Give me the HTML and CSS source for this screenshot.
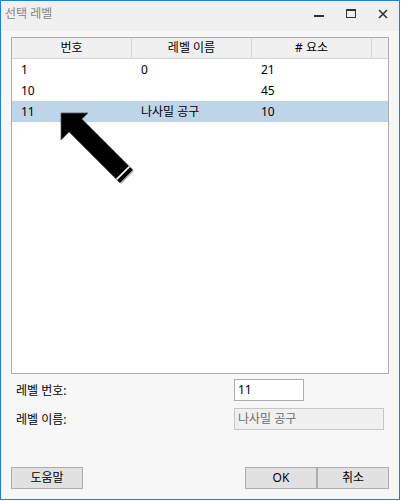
FILE: index.html
```html
<!DOCTYPE html>
<html lang="ko">
<head>
<meta charset="utf-8">
<title>선택 레벨</title>
<link rel="stylesheet" href="styles.css">
</head>
<body>
<div class="win">
  <div class="titlebar">
    <div class="title">선택 레벨</div>
    <div class="controls">
      <div class="ctl"><svg width="12" height="12" viewBox="0 0 12 12"><rect x="1" y="7" width="10" height="2" fill="#333"/></svg></div>
      <div class="ctl"><svg width="12" height="12" viewBox="0 0 12 12"><rect x="1.5" y="1.5" width="9" height="8" fill="none" stroke="#333" stroke-width="1"/><rect x="1" y="1" width="10" height="2" fill="#333"/></svg></div>
      <div class="ctl"><svg width="12" height="12" viewBox="0 0 12 12"><path d="M2 2 L10 10 M10 2 L2 10" stroke="#333" stroke-width="1.6"/></svg></div>
    </div>
  </div>
  <div class="client">
    <div class="list">
      <div class="row head">
        <div class="hc">번호</div>
        <div class="hc">레벨 이름</div>
        <div class="hc"># 요소</div>
        <div class="hc"></div>
      </div>
      <div class="row">
        <div class="c">1</div>
        <div class="c">0</div>
        <div class="c">21</div>
        <div class="c"></div>
      </div>
      <div class="row">
        <div class="c">10</div>
        <div class="c"></div>
        <div class="c">45</div>
        <div class="c"></div>
      </div>
      <div class="row sel">
        <div class="c">11</div>
        <div class="c">나사밀 공구</div>
        <div class="c">10</div>
        <div class="c"></div>
      </div>
    </div>
    <div class="form">
      <div class="lbl">레벨 번호:</div>
      <div class="field num">11</div>
      <div class="lbl">레벨 이름:</div>
      <div class="field name disabled">나사밀 공구</div>
    </div>
    <div class="buttons">
      <div class="btn">도움말</div>
      <div class="right">
        <div class="btn">OK</div>
        <div class="btn">취소</div>
      </div>
    </div>
  </div>
  <svg class="arrow" width="400" height="500" viewBox="0 0 400 500">
    <polygon points="61,113 88,113 81.9,119.1 132.9,170.1 120.1,182.9 69.1,131.9 61,140" fill="#000" stroke="#555" stroke-width="0.8" stroke-linejoin="miter"/>
    <line x1="129.4" y1="166.6" x2="116.6" y2="179.4" stroke="#fff" stroke-width="1.6"/>
    <line x1="131.6" y1="168.8" x2="118.8" y2="181.6" stroke="#000" stroke-width="1"/>
    <line x1="133.4" y1="170.6" x2="120.6" y2="183.4" stroke="#aaa" stroke-width="1.4"/>
  </svg>
</div>
</body>
</html>
```
FILE: styles.css
```css
* { box-sizing: border-box; }
html, body { margin: 0; padding: 0; background: #ffffff; }
body {
  font-family: "Noto Sans", "Noto Sans CJK KR", sans-serif;
  font-size: 12px;
  color: #000;
}
.win {
  position: relative;
  width: 400px;
  height: 500px;
  border: 1px solid #1883d7;
  background: #f7f7f7;
  display: flex;
  flex-direction: column;
}
.titlebar {
  height: 30px;
  flex: none;
  display: flex;
  align-items: center;
  background: #f0f0f0;
}
.title {
  flex: 1;
  padding-left: 4px;
  color: #858585;
  font-size: 12px;
  line-height: 16px;
  margin-top: -4px;
}
.controls { display: flex; align-self: stretch; }
.ctl {
  width: 32px;
  display: flex;
  align-items: center;
  justify-content: center;
  padding-bottom: 4px;
}
.client {
  flex: 1;
  display: flex;
  flex-direction: column;
  padding: 6px 10px 10px 10px;
}
.list {
  height: 337px;
  flex: none;
  border: 1px solid #adadad;
  background: #fff;
}
.row {
  display: grid;
  grid-template-columns: 120px 120px 120px 16px;
  height: 21px;
  align-items: center;
  line-height: 16px;
}
.row.head {
  height: 21px;
  background: #f0f0f0;
  border-bottom: 1px solid #d5d5d5;
  align-items: stretch;
}
.hc {
  border-right: 1px solid #d5d5d5;
  text-align: center;
  line-height: 19px;
}
.hc:last-child { border-right: none; }
.c { padding-left: 9px; white-space: nowrap; }
.row.sel { background: #bdd4e9; }
.form {
  margin-top: 5px;
  display: grid;
  grid-template-columns: 223px auto;
  row-gap: 7px;
  align-items: center;
}
.lbl { padding-left: 5px; }
.field {
  height: 22px;
  border: 1px solid #adadad;
  background: #fff;
  padding-left: 3px;
  line-height: 19px;
}
.field.num { width: 70px; }
.field.name { width: 150px; }
.field.disabled {
  background: #f0f0f0;
  border-color: #c6c6c6;
  color: #6d6d6d;
}
.buttons {
  margin-top: auto;
  display: flex;
  justify-content: space-between;
}
.right { display: flex; }
.btn {
  width: 72px;
  height: 22px;
  border: 1px solid #adadad;
  background: #e1e1e1;
  text-align: center;
  line-height: 19px;
}
.right .btn + .btn { margin-left: 0; }
.arrow {
  position: absolute;
  left: -1px;
  top: -1px;
  pointer-events: none;
}
```
